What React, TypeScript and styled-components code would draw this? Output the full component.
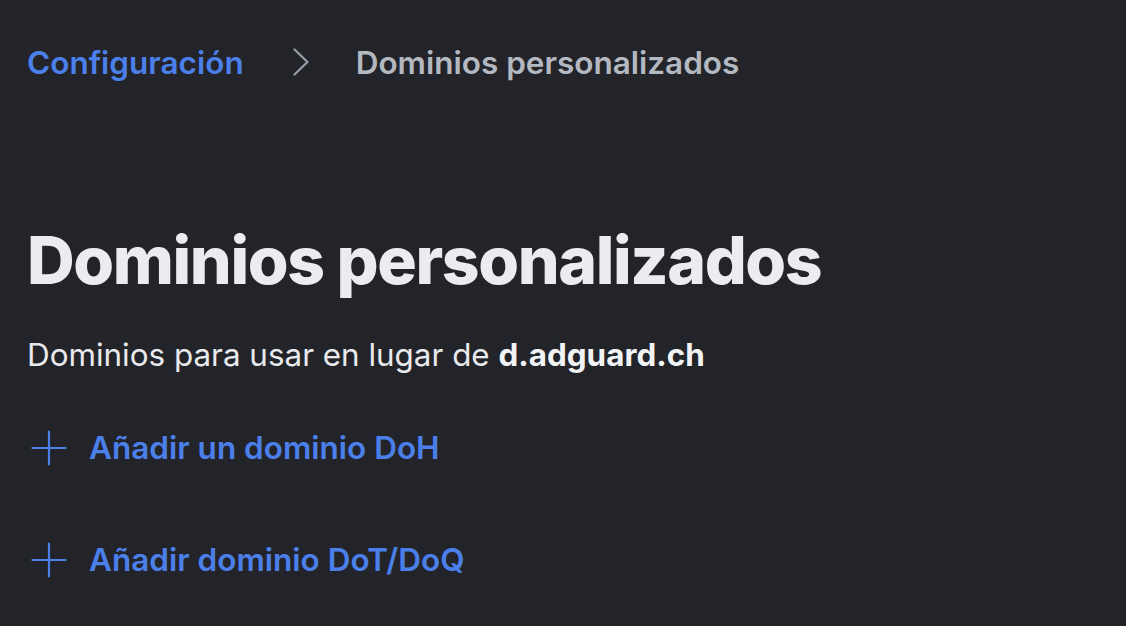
import styled, { createGlobalStyle } from 'styled-components';

const GlobalStyle = createGlobalStyle`
  html, body {
    margin: 0;
    padding: 0;
    background: #232429;
    font-family: Inter, "Noto Sans", sans-serif;
    -webkit-font-smoothing: antialiased;
  }
`;

const Page = styled.div`
  min-height: 626px;
  box-sizing: border-box;
  padding: 40px 27px 0;
  background: #232429;
`;

const Breadcrumbs = styled.nav`
  display: flex;
  align-items: center;
  height: 44px;
  font-size: 31.5px;
  font-weight: 600;
`;

const Crumb = styled.a<{ $current?: boolean }>`
  color: ${({ $current }) => ($current ? '#b4b8c0' : '#4b80eb')};
  text-decoration: none;
  cursor: ${({ $current }) => ($current ? 'default' : 'pointer')};
`;

const Chevron = styled.svg`
  width: 16px;
  height: 28px;
  margin: 0 47px 0 49px;
  color: #9a9ea6;
`;

const Title = styled.h1`
  margin: 134px 0 0;
  font-size: 66px;
  font-weight: 800;
  line-height: 84px;
  color: #ebecf0;
  letter-spacing: -1.4px;
`;

const Subtitle = styled.p`
  margin: 33px 0 0;
  font-size: 31.4px;
  line-height: 40px;
  color: #e9eaee;

  b {
    font-weight: 700;
    color: #f2f3f5;
  }
`;

const Actions = styled.div`
  display: flex;
  flex-direction: column;
  gap: 72px;
  margin-top: 53px;
`;

const AddLink = styled.button`
  display: flex;
  align-items: center;
  gap: 22px;
  padding: 0 0 0 4px;
  background: none;
  border: none;
  font-family: inherit;
  font-size: 31.5px;
  font-weight: 600;
  line-height: 40px;
  color: #4b80eb;
  cursor: pointer;
  text-align: left;
`;

const PlusIcon = () => (
  <svg width="36" height="36" viewBox="0 0 36 36" fill="none" stroke="currentColor" strokeWidth="2.2" strokeLinecap="round">
    <path d="M18 1.5v33M1.5 18h33" />
  </svg>
);

export default function App() {
  return (
    <>
      <GlobalStyle />
      <Page>
        <Breadcrumbs>
          <Crumb href="#">Configuración</Crumb>
          <Chevron viewBox="0 0 16 28" fill="none" stroke="currentColor" strokeWidth="2.2" strokeLinecap="round" strokeLinejoin="round">
            <path d="M1.5 1.5L14.5 14L1.5 26.5" />
          </Chevron>
          <Crumb $current>Dominios personalizados</Crumb>
        </Breadcrumbs>
        <Title>Dominios personalizados</Title>
        <Subtitle>
          Dominios para usar en lugar de <b>d.adguard.ch</b>
        </Subtitle>
        <Actions>
          <AddLink>
            <PlusIcon />
            Añadir un dominio DoH
          </AddLink>
          <AddLink>
            <PlusIcon />
            Añadir dominio DoT/DoQ
          </AddLink>
        </Actions>
      </Page>
    </>
  );
}
